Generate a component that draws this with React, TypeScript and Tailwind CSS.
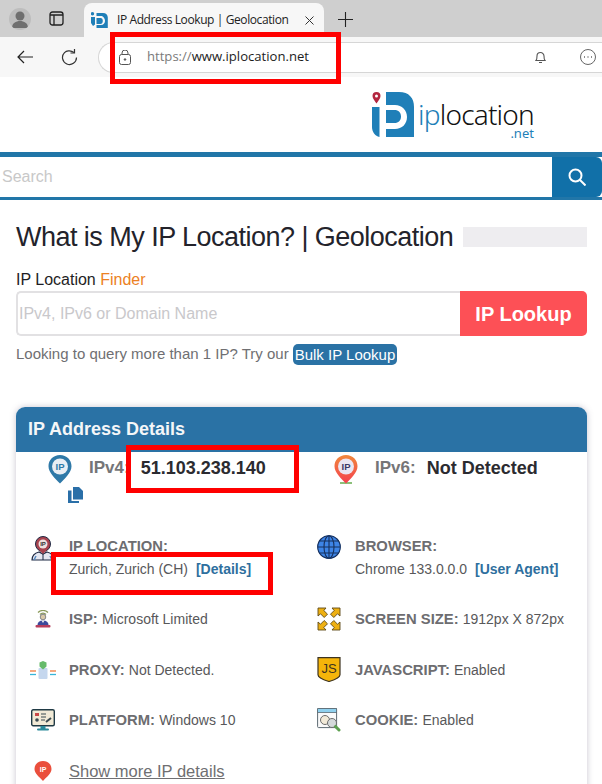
import React from "react";

const sans = { fontFamily: '"Liberation Sans", Arial, sans-serif' };

function Pin({ fill, inner, text, textColor, base }: { fill: string; inner: string; text: string; textColor: string; base?: boolean }) {
  return (
    <svg width="24" height="30" viewBox="0 0 24 30">
      <defs>
        <linearGradient id="pinGrad" x1="0" y1="0" x2="0" y2="1">
          <stop offset="0" stopColor="#f0883c" />
          <stop offset="1" stopColor="#f5404f" />
        </linearGradient>
      </defs>
      {base && <rect x="6" y="27" width="12" height="2" fill="#8cc07a" />}
      <path d="M12 0C5.200 0 .5 5 .5 11.200c0 6.400 7 12.800 11.500 17.300 4.500-4.500 11.500-10.900 11.500-17.300C23.500 5 18.800 0 12 0z" fill={fill} />
      <circle cx="12" cy="11.500" r="8" fill={inner} />
      <text x="12" y="15" textAnchor="middle" fontSize="9.500" fontWeight="700" fill={textColor} fontFamily="Liberation Sans">{text}</text>
    </svg>
  );
}

function LocationIcon() {
  return (
    <svg width="24" height="26" viewBox="0 0 24 26">
      <path d="M1 25c0-5 3-7 7-8l4 2 4-2c4 1 7 3 7 8z" fill="#e6e8f2" stroke="#1f2a44" strokeWidth="1.200" />
      <path d="M12 19v6" stroke="#1f2a44" />
      <circle cx="12" cy="9" r="7.500" fill="#a8434f" stroke="#1f2a44" />
      <circle cx="12" cy="9" r="4.500" fill="#efe3e0" />
      <text x="12" y="11.200" textAnchor="middle" fontSize="6" fontWeight="700" fill="#333" fontFamily="Liberation Sans">IP</text>
      <path d="M8 15l4 4 4-4z" fill="#a8434f" />
      <path d="M3 25l2-4M21 25l-2-4" stroke="#5a8ac0" strokeWidth="1.500" />
    </svg>
  );
}

function GlobeIcon() {
  return (
    <svg width="24" height="24" viewBox="0 0 24 24" fill="none">
      <circle cx="12" cy="12" r="11.500" fill="#3d84e6" />
      <g stroke="#17305c" strokeWidth="1.100">
        <circle cx="12" cy="12" r="11.300" />
        <ellipse cx="12" cy="12" rx="5" ry="11.300" />
        <path d="M12 .7v22.600M.7 12h22.600M2.500 6h19M2.500 18h19" />
      </g>
    </svg>
  );
}

function IspIcon() {
  return (
    <svg width="16" height="18" viewBox="0 0 16 18">
      <path d="M3 2.500a7 7 0 0110 0M5 4.500a4 4 0 016 0" stroke="#8b9a5b" fill="none" strokeWidth="1.200" />
      <circle cx="8" cy="7" r="2.800" fill="#d9c9a8" stroke="#59606e" strokeWidth=".7" />
      <path d="M2.500 15c0-3 2-4.500 5.500-4.500s5.500 1.500 5.500 4.500z" fill="#3c4a9c" />
      <path d="M6.500 10.500L8 13l1.500-2.500z" fill="#eee" />
      <rect x="0.500" y="15" width="15" height="2.500" rx="1" fill="#b73e5c" />
    </svg>
  );
}

function ProxyIcon() {
  return (
    <svg width="26" height="18" viewBox="0 0 26 18">
      <rect x="8.500" y="7" width="9" height="11" rx="1" fill="#c5d7ee" />
      <path d="M13 0l3.500 1.500v4l-3.500 3-3.500-3v-4z" fill="#66bb6a" />
      <path d="M0 10h6" stroke="#f07a3c" strokeWidth="1.300" />
      <path d="M0 13.500h6" stroke="#37b5d8" strokeWidth="1.300" />
      <path d="M20 10h6" stroke="#f07a3c" strokeWidth="1.300" />
      <path d="M20 13.500h6" stroke="#37b5d8" strokeWidth="1.300" />
    </svg>
  );
}

function PlatformIcon() {
  return (
    <svg width="24" height="22" viewBox="0 0 24 22">
      <rect x=".7" y=".7" width="22.600" height="16" rx="1.500" fill="#f1ead6" stroke="#203a45" strokeWidth="1.400" />
      <rect x="9.500" y="17" width="5" height="3" fill="#2a8a9a" />
      <rect x="6" y="19.500" width="12" height="2" rx="1" fill="#2a8a9a" />
      <rect x="4" y="4" width="4" height="3" fill="#c84848" />
      <circle cx="6" cy="11" r="1.800" fill="#3a4a50" />
      <path d="M10 5h5M10 8h5M10 11h4" stroke="#3a4a50" strokeWidth="1.200" />
      <path d="M15 13l5-4" stroke="#3a4a50" strokeWidth="2" />
    </svg>
  );
}

function ScreenIcon() {
  return (
    <svg width="24" height="24" viewBox="0 0 24 24">
      <g fill="#eeb012" stroke="#5f4a18" strokeWidth=".9" strokeLinejoin="round">
        <path d="M1 1h8L6.800 3.500l3.700 3.700-3.300 3.300-3.700-3.700L1 9z" />
        <path d="M23 1h-8l2.200 2.500-3.700 3.700 3.300 3.300 3.700-3.700L23 9z" />
        <path d="M1 23h8l-2.200-2.500 3.700-3.700-3.300-3.300-3.700 3.700L1 15z" />
        <path d="M23 23h-8l2.200-2.500-3.700-3.700 3.300-3.300 3.700 3.700L23 15z" />
      </g>
    </svg>
  );
}

function JsIcon() {
  return (
    <svg width="24" height="25" viewBox="0 0 24 25">
      <path d="M1 .7h22v17c0 3-5 5-11 6.800C6 22.700 1 20.700 1 17.700z" fill="#f5b50a" stroke="#3c3320" strokeWidth="1.200" />
      <text x="12" y="16" textAnchor="middle" fontSize="13" fill="#3c3320" fontFamily="Liberation Sans">JS</text>
    </svg>
  );
}

function CookieIcon() {
  return (
    <svg width="24" height="24" viewBox="0 0 24 24">
      <rect x=".6" y=".6" width="19" height="19" rx="1" fill="#fafafa" stroke="#5d6a72" strokeWidth="1" />
      <rect x=".6" y=".6" width="19" height="4" fill="#8fd0ee" stroke="#5d6a72" strokeWidth=".8" />
      <circle cx="8" cy="12" r="4.500" fill="#f2ead8" stroke="#6c6c6c" />
      <circle cx="15" cy="15" r="4.500" fill="#d5dadb" stroke="#6c6c6c" />
      <path d="M18.500 18.500l3.500 3.500" stroke="#5da050" strokeWidth="3" strokeLinecap="round" />
    </svg>
  );
}

function MoreIcon() {
  return (
    <svg width="18" height="22" viewBox="0 0 18 22">
      <path d="M9 0C4 0 .5 3.500.5 8c0 4.500 5 8 8.500 12 3.500-4 8.500-7.500 8.500-12C17.500 3.500 14 0 9 0z" fill="#ea4f3c" />
      <text x="9" y="10.500" textAnchor="middle" fontSize="7" fontWeight="700" fill="#fff" fontFamily="Liberation Sans">IP</text>
    </svg>
  );
}

function LogoMark() {
  return (
    <svg width="43" height="46" viewBox="0 0 43 46">
      <path d="M4.500 0A4 4 0 018.500 4C8.500 6.500 6 9 4.500 11.500 3 9 .5 6.500.5 4A4 4 0 014.500 0z" fill="#b3263f" />
      <circle cx="4.500" cy="4" r="1.500" fill="#fff" />
      <path d="M0 15h7.500v30C3 44 0 40 0 35z" fill="#1f7fb8" />
      <path d="M14 0h13c10 0 15 6 15 15v30H14V37h9c7 0 12-5 12-12S30 13 23 13h-9zM14 18h8.500c4 0 6.500 2.500 6.500 6.500S26.500 31 22.500 31H14z" fill="#1f7fb8" />
    </svg>
  );
}

function Row({ icon, children, className }: { icon: React.ReactNode; children: React.ReactNode; className?: string }) {
  return (
    <div className={`flex ${className ?? "items-center"}`}>
      <div className="flex w-[53px] shrink-0 justify-center">{icon}</div>
      <div className="text-[14.800px] leading-[18px] text-[#58585a]">{children}</div>
    </div>
  );
}

const Lab = ({ children }: { children: React.ReactNode }) => <b className="font-bold text-[#6d6d70]">{children}</b>;
const Val = ({ children }: { children: React.ReactNode }) => <span className="text-[14px]">{children}</span>;

export default function App() {
  return (
    <div className="relative h-[784px] w-[602px] overflow-hidden bg-white" style={sans}>
      {/* Tab strip */}
      <div className="flex h-[37px] items-end bg-[#cfcfcf]">
        <div className="flex h-[37px] w-[84px] items-center pl-[9px]">
          <div className="flex h-[22px] w-[22px] items-center justify-center overflow-hidden rounded-full bg-[#bdbdbd]">
            <svg width="22" height="22" viewBox="0 0 22 22"><circle cx="11" cy="8" r="4.500" fill="#6f6f6f" /><path d="M3 20c0-5 4-7 8-7s8 2 8 7z" fill="#6f6f6f" /></svg>
          </div>
          <svg className="ml-[18px]" width="15" height="15" viewBox="0 0 15 15" fill="none" stroke="#222" strokeWidth="1.300"><rect x="1" y="1" width="13" height="13" rx="2.500" /><path d="M1 4h13M5 4v10" /></svg>
        </div>
        <div className="flex h-[34px] w-[240px] items-center rounded-t-[8px] bg-[#f7f7f7] pl-[7px]">
          <svg width="17" height="17" viewBox="0 0 17 17"><path d="M0 5h4v7.500L2 14 0 11zM1.500 0a1.700 1.700 0 110 3.400 1.700 1.700 0 010-3.400zM5.500 1H12c3 0 4.800 2 4.800 4.500V16H5.500v-3H10c2.500 0 4-1.700 4-4S12.500 4 10 4H5.500zM5.500 6h4c1.500 0 2.300 1.300 2.300 3s-1 3-2.300 3h-4z" fill="#1f7fb8" /></svg>
          <span className="ml-[9px] whitespace-nowrap text-[12px] tracking-[-0.400px] text-[#222]" style={{ fontFamily: '"Open Sans", sans-serif' }}>IP Address Lookup | Geolocation</span>
          <svg className="ml-[16px]" width="9" height="9" viewBox="0 0 9 9" stroke="#333" strokeWidth="1"><path d="M.5.500l8 8M8.500.500l-8 8" /></svg>
        </div>
        <svg className="mb-[10px] ml-[14px]" width="15" height="15" viewBox="0 0 15 15" stroke="#222" strokeWidth="1.100"><path d="M7.500 0v15M0 7.500h15" /></svg>
      </div>

      {/* Toolbar */}
      <div className="flex h-[40px] items-center bg-[#f7f7f7]">
        <svg className="ml-[17px]" width="16" height="14" viewBox="0 0 16 14" fill="none" stroke="#222" strokeWidth="1.200"><path d="M16 7H1M7 1L1 7l6 6" /></svg>
        <svg className="ml-[28px]" width="17" height="17" viewBox="0 0 17 17" fill="none" stroke="#333" strokeWidth="1.200"><path d="M15.500 8.500A7 7 0 113.500 3.600C5 2.300 9 .5 13 3.500" /><path d="M13.500 0v4h-4" /></svg>
        <div className="ml-[20px] flex h-[31px] flex-1 items-center rounded-l-full border-y border-l border-[#d6d6d6] bg-white pl-[20px]">
          <svg width="12" height="15" viewBox="0 0 12 15" fill="none" stroke="#555" strokeWidth="1"><rect x=".5" y="4.500" width="11" height="10" rx="2" /><path d="M3 4.500V3a3 3 0 016 0v1.500" /><circle cx="6" cy="9.500" r=".8" fill="#555" /></svg>
          <span className="ml-[16px] text-[13.100px] text-[#1c1c1c]" style={{ fontFamily: '"Open Sans", sans-serif' }}><span className="text-[#7a7a7a]">https://</span>www.iplocation.net</span>
          <svg className="ml-auto" width="11" height="14" viewBox="0 0 11 14" fill="none" stroke="#555" strokeWidth="1.100"><path d="M1 10.500c1-1 1-2 1-4.500a3.500 3.500 0 017 0c0 2.500 0 3.500 1 4.500zM4 12.500h3" /></svg>
          <svg className="ml-[34px] mr-[6px]" width="16" height="16" viewBox="0 0 16 16" fill="none" stroke="#666"><circle cx="8" cy="8" r="7.500" /><path d="M4 8h1M7.500 8h1M11 8h1" strokeWidth="1.400" /></svg>
        </div>
      </div>

      {/* Page */}
      <div className="h-[75px] pl-[372px] pt-[15px]">
        <div className="flex">
          <LogoMark />
          <div className="ml-[3px] flex flex-col pt-[9px]">
            <div className="text-[28px] leading-[26px] tracking-[-0.800px] text-[#111]" style={{ fontFamily: '"Noto Sans", sans-serif', fontWeight: 300 }}>
              <span className="text-[#1f7fb8]">ip</span>location
            </div>
            <div className="self-end text-[13px] leading-[12px] text-[#1f7fb8]" style={{ fontFamily: '"Noto Sans", sans-serif' }}>.net</div>
          </div>
        </div>
      </div>

      <div className="flex h-[48px] border-t-[5px] border-b-[3px] border-[#2176a8] bg-white">
        <div className="flex-1 pl-[2px] text-[16px] leading-[40px] text-[#c8c8c8]">Search</div>
        <div className="flex w-[50px] items-center justify-center rounded-r-[6px] bg-[#1170a8]">
          <svg width="18" height="18" viewBox="0 0 18 18" fill="none" stroke="#fff" strokeWidth="2"><circle cx="7.500" cy="7.500" r="6" /><path d="M12 12l5.500 5.500" /></svg>
        </div>
      </div>

      <div className="pl-[16px] pr-[15px]">
        <div className="mt-[20px] flex items-center">
          <h1 className="whitespace-nowrap text-[27px] font-normal leading-[34px] tracking-[-0.530px] text-[#23232b]">What is My IP Location? | Geolocation</h1>
          <div className="ml-[10px] h-[20px] flex-1 bg-[#eeedf0]" />
        </div>
        <div className="mt-[17px] text-[16px] leading-[18px] text-[#1e1e24]">IP Location <span className="text-[#ec8124]">Finder</span></div>
        <div className="mt-[2px] flex h-[45px]">
          <div className="flex flex-1 items-center rounded-l-[5px] border-2 border-r-0 border-[#e2e1e3] pl-px text-[16px] text-[#c9c8cb]">IPv4, IPv6 or Domain Name</div>
          <div className="flex w-[127px] items-center justify-center rounded-r-[5px] bg-[#fd5056] text-[20px] font-bold text-white">IP Lookup</div>
        </div>
        <div className="mt-[7px] flex items-center text-[15px] text-[#6f6f72]">
          Looking to query more than 1 IP? Try our
          <span className="ml-[4px] rounded-[5px] bg-[#2a72a5] px-[2px] leading-[21px] text-white">Bulk IP Lookup</span>
        </div>

        <div className="mt-[41px] rounded-t-[9px] shadow-[0_0_6px_rgba(100,90,120,0.35)]">
          <div className="flex h-[45px] items-center rounded-t-[9px] bg-[#2a72a5] pl-[12px] text-[18px] font-bold text-[#f4f6f8]">IP Address Details</div>
          <div className="grid h-[340px] grid-cols-[286px_1fr] content-start bg-white">
            <div className="h-[78px] pl-[32px] pt-[3px]">
              <div className="flex">
                <Pin fill="#2f79a8" inner="#e9eef4" text="IP" textColor="#2f79a8" />
                <span className="ml-[17px] text-[17px] font-bold leading-[26px] text-[#757578]">IPv4:</span>
                <span className="ml-[11px] text-[18px] font-bold leading-[26px] text-[#2b2b30]">51.103.238.140</span>
              </div>
              <svg className="ml-[20px] mt-[2px]" width="15" height="16" viewBox="0 0 15 16"><path d="M5 0h6l4 4v8.500H5zM0 3.500h3.500v10.500H11V16H0z" fill="#2a6fa8" /></svg>
            </div>
            <div className="h-[78px] pl-[32px] pt-[3px]">
              <div className="flex">
                <Pin fill="url(#pinGrad)" inner="#ebe6f2" text="IP" textColor="#3c3a66" base />
                <span className="ml-[17px] text-[17px] font-bold leading-[26px] text-[#757578]">IPv6:</span>
                <span className="ml-[11px] text-[18px] font-bold leading-[26px] text-[#2b2b30]">Not Detected</span>
              </div>
            </div>

            <Row icon={<LocationIcon />} className="h-[64px] items-start pt-[5px]">
              <div className="leading-[23px]"><Lab>IP LOCATION:</Lab><br /><Val>Zurich, Zurich (CH) <b className="ml-[4px] text-[#2e6f9e]">[Details]</b></Val></div>
            </Row>
            <Row icon={<GlobeIcon />} className="h-[64px] items-start pt-[5px]">
              <div className="leading-[23px]"><Lab>BROWSER:</Lab><br /><Val>Chrome 133.0.0.0 <b className="ml-[4px] text-[#2e6f9e]">[User Agent]</b></Val></div>
            </Row>

            <Row icon={<IspIcon />} className="h-[51px] items-center"><Lab>ISP:</Lab> <Val>Microsoft Limited</Val></Row>
            <Row icon={<ScreenIcon />} className="h-[51px] items-center"><Lab>SCREEN SIZE:</Lab> <Val>1912px X 872px</Val></Row>
            <Row icon={<ProxyIcon />} className="h-[50px] items-center"><Lab>PROXY:</Lab> <Val>Not Detected.</Val></Row>
            <Row icon={<JsIcon />} className="h-[50px] items-center"><Lab>JAVASCRIPT:</Lab> <Val>Enabled</Val></Row>
            <Row icon={<PlatformIcon />} className="h-[51px] items-center"><Lab>PLATFORM:</Lab> <Val>Windows 10</Val></Row>
            <Row icon={<CookieIcon />} className="h-[51px] items-center"><Lab>COOKIE:</Lab> <Val>Enabled</Val></Row>
            <Row icon={<MoreIcon />} className="h-[52px] items-center"><span className="text-[16.500px] text-[#6f6f72] underline">Show more IP details</span></Row>
          </div>
        </div>
      </div>

      {/* Red annotation boxes drawn over the screenshot */}
      <div className="absolute left-[110px] top-[32px] h-[52px] w-[231px] border-[5px] border-[#ff0000]" />
      <div className="absolute left-[126px] top-[445px] h-[48px] w-[173px] border-[5px] border-[#ff0000]" />
      <div className="absolute left-[51px] top-[552px] h-[43px] w-[222px] border-[5px] border-[#ff0000]" />
    </div>
  );
}
